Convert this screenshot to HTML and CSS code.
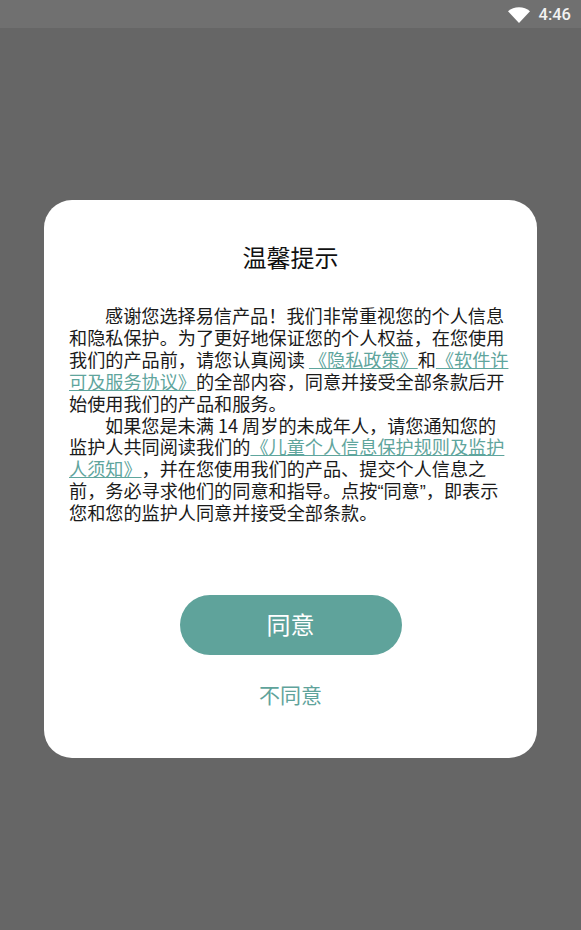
FILE: index.html
```html
<!DOCTYPE html>
<html lang="zh-CN">
<head>
<meta charset="utf-8">
<title>温馨提示</title>
<link rel="stylesheet" href="styles.css">
</head>
<body>
<div class="statusbar">
  <svg class="wifi" viewBox="0 0 22 16" width="22" height="16"><path d="M0 4.3C3 1.8 6.8 0.3 11 0.3S19 1.8 22 4.3L11 16Z" fill="#fff"/></svg>
  <span class="time">4:46</span>
</div>
<main class="screen">
  <section class="dialog">
    <h1 class="title">温馨提示</h1>
    <div class="body">
      <p class="para">感谢您选择易信产品&#xFF01;我们非常重视您的个人信息<br>和隐私保护。为了更好地保证您的个人权益&#xFF0C;在您使用<br>我们的产品前&#xFF0C;请您认真阅读 <a class="link">《隐私政策》</a>和<a class="link">《软件许<br>可及服务协议》</a>的全部内容&#xFF0C;同意并接受全部条款后开<br>始使用我们的产品和服务。</p>
      <p class="para">如果您是未满 14 周岁的未成年人&#xFF0C;请您通知您的<br>监护人共同阅读我们的<a class="link">《儿童个人信息保护规则及监护<br>人须知》</a>&#xFF0C;并在您使用我们的产品、提交个人信息之<br>前&#xFF0C;务必寻求他们的同意和指导。点按<span class="quote">“</span>同意<span class="quote">”</span>&#xFF0C;即表示<br>您和您的监护人同意并接受全部条款。</p>
    </div>
    <button class="agree">同意</button>
    <button class="disagree">不同意</button>
  </section>
</main>
</body>
</html>
```
FILE: styles.css
```css
* { box-sizing: border-box; }
html, body { margin: 0; padding: 0; }
body {
  width: 581px;
  height: 930px;
  background: #666;
  font-family: "Noto Sans CJK SC", "Noto Sans", sans-serif;
  text-spacing-trim: space-all;
  font-feature-settings: "palt" 0, "chws" 0;
  display: flex;
  flex-direction: column;
  overflow: hidden;
}
.statusbar {
  height: 28px;
  background: #707070;
  display: flex;
  align-items: center;
  justify-content: flex-end;
  gap: 9px;
  padding: 2px 10px 0 0;
  flex: none;
}
.wifi { display: block; }
.time {
  font-family: Roboto, sans-serif;
  font-weight: 500;
  font-size: 16.5px;
  color: #f2f2f2;
  line-height: 26px;
}
.screen {
  flex: 1;
  padding: 172px 44px 0;
}
.dialog {
  width: 493px;
  height: 558px;
  background: #fff;
  border-radius: 28px;
  padding: 40px 25px 0;
  display: flex;
  flex-direction: column;
  align-items: center;
}
.title {
  margin: 0;
  font-size: 24px;
  font-weight: 400;
  line-height: 34px;
  color: #111;
  text-align: center;
}
.body {
  align-self: stretch;
  margin-top: 31px;
  height: 290px;
  font-size: 18.15px;
  line-height: 21.9px;
  color: #1a1a1a;
  white-space: nowrap;
}
.para { margin: 0; text-indent: 36px; }
.link { color: #5fa59d; text-decoration: underline; white-space: pre; }
.quote { font-family: "Liberation Sans", sans-serif; line-height: 0; }
.agree {
  width: 222px;
  height: 60px;
  flex: none;
  border: 0;
  border-radius: 30px;
  background: #5fa39b;
  color: #fff;
  font: inherit;
  font-size: 24px;
  padding: 0 0 4px;
}
.disagree {
  margin-top: 21px;
  border: 0;
  background: none;
  color: #5fa39b;
  font: inherit;
  font-size: 21px;
  line-height: 36px;
  padding: 0;
}
```
